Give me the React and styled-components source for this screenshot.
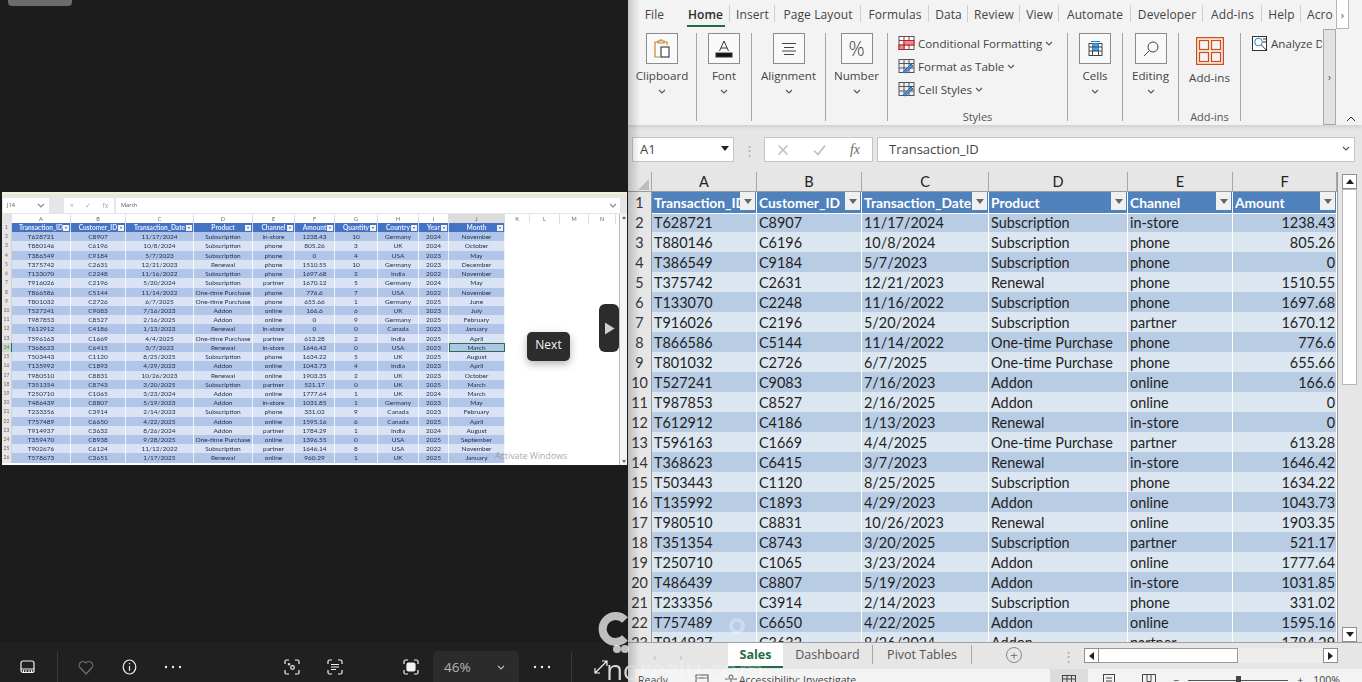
import React from "react";
import styled, { createGlobalStyle } from "styled-components";

const Global = createGlobalStyle`
  html, body { margin: 0; padding: 0; background: #1c1c1c; overflow: hidden; }
  #root { width: 1362px; height: 682px; overflow: hidden; }
  * { box-sizing: border-box; }
`;

const DATA = [
  ["T628721","C8907","11/17/2024","Subscription","in-store","1238.43","10","Germany","2024","November"],
  ["T880146","C6196","10/8/2024","Subscription","phone","805.26","3","UK","2024","October"],
  ["T386549","C9184","5/7/2023","Subscription","phone","0","4","USA","2023","May"],
  ["T375742","C2631","12/21/2023","Renewal","phone","1510.55","10","Germany","2023","December"],
  ["T133070","C2248","11/16/2022","Subscription","phone","1697.68","2","India","2022","November"],
  ["T916026","C2196","5/20/2024","Subscription","partner","1670.12","5","Germany","2024","May"],
  ["T866586","C5144","11/14/2022","One-time Purchase","phone","776.6","7","USA","2022","November"],
  ["T801032","C2726","6/7/2025","One-time Purchase","phone","655.66","1","Germany","2025","June"],
  ["T527241","C9083","7/16/2023","Addon","online","166.6","6","UK","2023","July"],
  ["T987853","C8527","2/16/2025","Addon","online","0","9","Germany","2025","February"],
  ["T612912","C4186","1/13/2023","Renewal","in-store","0","0","Canada","2023","January"],
  ["T596163","C1669","4/4/2025","One-time Purchase","partner","613.28","2","India","2025","April"],
  ["T368623","C6415","3/7/2023","Renewal","in-store","1646.42","0","USA","2023","March"],
  ["T503443","C1120","8/25/2025","Subscription","phone","1634.22","5","UK","2025","August"],
  ["T135992","C1893","4/29/2023","Addon","online","1043.73","4","India","2023","April"],
  ["T980510","C8831","10/26/2023","Renewal","online","1903.35","2","UK","2023","October"],
  ["T351354","C8743","3/20/2025","Subscription","partner","521.17","0","UK","2025","March"],
  ["T250710","C1065","3/23/2024","Addon","online","1777.64","1","UK","2024","March"],
  ["T486439","C8807","5/19/2023","Addon","in-store","1031.85","1","Germany","2023","May"],
  ["T233356","C3914","2/14/2023","Subscription","phone","331.02","9","Canada","2023","February"],
  ["T757489","C6650","4/22/2025","Addon","online","1595.16","6","Canada","2025","April"],
  ["T914937","C3632","8/26/2024","Addon","partner","1784.29","1","India","2024","August"],
  ["T359470","C8938","9/28/2025","One-time Purchase","online","1396.55","0","USA","2025","September"],
  ["T902676","C6124","11/12/2022","Subscription","partner","1646.14","8","USA","2022","November"],
  ["T578673","C3651","1/17/2025","Renewal","online","960.29","1","UK","2025","January"],
];
const HEADERS = ["Transaction_ID","Customer_ID","Transaction_Date","Product","Channel","Amount","Quantity","Country","Year","Month"];

/* ---------- page ---------- */
const Page = styled.div`
  position: relative;
  display: flex;
  width: 1362px;
  height: 682px;
  overflow: hidden;
  font-family: "Open Sans", "Noto Sans", sans-serif;
`;
const Viewer = styled.div`
  width: 628px;
  height: 682px;
  display: flex;
  flex-direction: column;
  background: #1c1c1c;
`;
const TopPill = styled.div`
  width: 64px;
  height: 6px;
  margin-left: 8px;
  background: #6b6b6b;
  border-radius: 0 0 4px 4px;
`;
const Stage = styled.div`
  position: relative;
  flex: 1;
  padding: 186px 1px 0 2px;
`;

/* ---------- mini sheet picture ---------- */
const Shot = styled.div`
  width: 625px;
  height: 273px;
  background: #fff;
  display: flex;
  flex-direction: column;
  overflow: hidden;
  font-family: Lato, sans-serif;
  filter: blur(0.35px);
  border-top: 2px solid #f1f2cf;
`;
const ShotBar = styled.div`
  height: 20px;
  flex: none;
  background: #e6e6e6;
  display: flex;
  align-items: center;
  padding: 2px 7px 0 1px;
  font-family: "Open Sans", sans-serif;
  font-size: 5.6px;
  color: #555;
`;
const ShotName = styled.div`
  width: 46px;
  height: 15px;
  background: #fff;
  display: flex;
  align-items: center;
  justify-content: space-between;
  padding: 0 4px;
`;
const ShotFx = styled.div`
  width: 50px;
  height: 15px;
  margin-left: 15px;
  background: #fff;
  display: flex;
  align-items: center;
  justify-content: space-around;
  color: #aaa;
  font-size: 7px;
`;
const ShotInput = styled.div`
  flex: 1;
  height: 15px;
  margin-left: 2px;
  background: #fff;
  display: flex;
  align-items: center;
  justify-content: space-between;
  padding: 0 3px 0 5px;
`;
const ShotBody = styled.div`
  flex: 1;
  display: flex;
  min-height: 0;
`;
const ShotGrid = styled.div`
  width: 618px;
  border-right: 1px solid #bbb;
  display: flex;
  flex-direction: column;
`;
const ShotScroll = styled.div`
  flex: 1;
  background: #f4f4f4;
  display: flex;
  flex-direction: column;
  justify-content: space-between;
  align-items: center;
  padding: 2px 0;
`;
const ShotArrow = styled.span`
  width: 0;
  height: 0;
  border: 2px solid transparent;
  ${(p) => (p.$up ? "border-top: 0; border-bottom: 3px solid #666;" : "border-bottom: 0; border-top: 3px solid #666;")}
`;
const MINI_COLS = "10px 59px 55px 68px 59px 42px 40px 43px 41px 30px 56px 25px 30px 29px 27px 4px";
const MiniHead = styled.div`
  display: grid;
  grid-template-columns: ${MINI_COLS};
  height: 9px;
  flex: none;
  font-size: 5.6px;
  line-height: 9px;
  color: #666;
  text-align: center;
`;
const MiniLetter = styled.div`
  border-right: 1px solid #dfdfdf;
  background: ${(p) => (p.$gutter ? "#e4e4e4" : p.$active ? "#dcdcdc" : "#fff")};
  border-bottom: ${(p) => (p.$active ? "1px solid #217346" : "none")};
`;
const MiniRow = styled.div`
  display: grid;
  grid-template-columns: ${MINI_COLS};
  height: 9.23px;
  font-size: ${(p) => (p.$title ? "6.6px" : "6.5px")};
  line-height: 9.23px;
  text-align: center;
  color: #1f2c47;
  font-weight: ${(p) => (p.$title ? 700 : 400)};
`;
const MiniCell = styled.div`
  position: relative;
  white-space: nowrap;
  overflow: hidden;
  border-right: 1px solid rgba(255, 255, 255, 0.75);
  background: ${(p) => (p.$title ? "#4472c4" : p.$dark ? "#b1c5e8" : "#dae3f3")};
  color: ${(p) => (p.$title ? "#e8eefa" : "inherit")};
  outline: ${(p) => (p.$selected ? "1px solid #217346" : "none")};
  outline-offset: -1px;
`;
const MiniNum = styled.div`
  background: ${(p) => (p.$active ? "#c9d8cf" : "#e6e6e6")};
  color: #666;
  font-size: 5px;
  font-weight: 400;
  border-right: 1px solid ${(p) => (p.$active ? "#217346" : "#d0d0d0")};
`;
const MiniBlank = styled.div`
  background: #fff;
`;
const MiniFilter = styled.span`
  position: absolute;
  right: 1px;
  top: 1.5px;
  width: 6px;
  height: 6px;
  background: #f2f2f2;
  &::after {
    content: "";
    position: absolute;
    left: 1.5px;
    top: 2px;
    border: 1.5px solid transparent;
    border-top: 2px solid #555;
    border-bottom: 0;
  }
`;
const Activate = styled.div`
  position: absolute;
  left: 495px;
  top: 444px;
  font-family: "Open Sans", sans-serif;
  font-size: 8.8px;
  line-height: 12px;
  color: rgba(150, 150, 150, 0.85);
  white-space: nowrap;
`;
const NextTip = styled.div`
  position: absolute;
  left: 527px;
  top: 326px;
  width: 43px;
  height: 29px;
  background: #2c2c2c;
  border-radius: 5px;
  box-shadow: 0 3px 8px rgba(0, 0, 0, 0.3);
  color: #f4f4f4;
  font-size: 12px;
  display: flex;
  align-items: center;
  justify-content: center;
  padding-bottom: 4px;
`;
const NextArrow = styled.div`
  position: absolute;
  left: 599px;
  top: 298px;
  width: 20px;
  height: 48px;
  background: #2c2c2c;
  border-radius: 6px;
  display: flex;
  align-items: center;
  justify-content: center;
`;

/* ---------- viewer toolbar ---------- */
const ViewerBar = styled.div`
  height: 40px;
  flex: none;
  background: #202020;
  padding: 9px 0 0 7px;
  display: flex;
  align-items: flex-start;
`;
const ToolButton = styled.div`
  width: 40px;
  height: 32px;
  margin-left: ${(p) => p.$ml || 0}px;
  display: flex;
  align-items: center;
  justify-content: center;
  flex: none;
`;
const ToolSep = styled.div`
  width: 1px;
  height: 32px;
  margin-top: 1px;
  margin-left: ${(p) => p.$ml || 0}px;
  background: #3a3a3a;
  flex: none;
`;
const ZoomBox = styled.div`
  width: 86px;
  height: 32px;
  margin-left: 2px;
  background: #2b2b2b;
  border-radius: 4px 4px 0 0;
  display: flex;
  align-items: center;
  justify-content: space-between;
  padding: 0 14px 0 11px;
  color: #b5b5b5;
  font-family: "Open Sans", sans-serif;
  font-size: 13.5px;
  flex: none;
`;
const Glyph = styled.svg`
  display: block;
  fill: none;
  stroke: ${(p) => p.$c || "#f2f2f2"};
  stroke-width: ${(p) => p.$sw || 1.2};
  flex: none;
`;

const Dots = () => (
  <Glyph width="18" height="4" viewBox="0 0 18 4" $sw="0">
    <circle cx="2" cy="2" r="1.2" fill="#eee" />
    <circle cx="9" cy="2" r="1.2" fill="#eee" />
    <circle cx="16" cy="2" r="1.2" fill="#eee" />
  </Glyph>
);
const Corners = ({ children }) => (
  <Glyph width="16" height="16" viewBox="0 0 16 16">
    <path d="M1 5V2.5A1.5 1.5 0 0 1 2.5 1H5M11 1h2.5A1.5 1.5 0 0 1 15 2.5V5M15 11v2.5a1.5 1.5 0 0 1-1.500 1.500H11M5 15H2.500A1.500 1.500 0 0 1 1 13.500V11" />
    {children}
  </Glyph>
);

/* ---------- excel ---------- */
const Excel = styled.div`
  position: relative;
  width: 734px;
  height: 682px;
  background: #e6e6e6;
  display: flex;
  flex-direction: column;
  overflow: hidden;
  &::before {
    content: "";
    position: absolute;
    left: 0;
    top: 0;
    bottom: 0;
    width: 12px;
    z-index: 3;
    pointer-events: none;
    background: linear-gradient(90deg, rgba(0, 0, 0, 0.18), rgba(0, 0, 0, 0));
  }
`;
const Ribbon = styled.div`
  position: relative;
  height: 125px;
  flex: none;
  background: #f3f3f3;
  box-shadow: 0 2px 4px rgba(0, 0, 0, 0.1);
  font-size: 11.6px;
  color: #444;
`;
const TabRow = styled.div`
  height: 29px;
  display: flex;
  align-items: stretch;
  overflow: hidden;
`;
const RibbonTab = styled.div`
  position: relative;
  width: ${(p) => p.$w}px;
  flex: none;
  display: flex;
  align-items: center;
  justify-content: ${(p) => (p.$start ? "flex-start" : "center")};
  padding-left: ${(p) => (p.$start ? 6 : 0)}px;
  font-size: 12px;
  letter-spacing: 0.1px;
  color: ${(p) => (p.$on ? "#2b2b2b" : "#444")};
  font-weight: ${(p) => (p.$on ? 600 : 400)};
  white-space: nowrap;
  &::after {
    content: "";
    position: absolute;
    top: 5px;
    bottom: 7px;
    right: 0;
    width: 1px;
    background: ${(p) => (p.$plain ? "transparent" : "#cfcfcf")};
  }
`;
const HomeMark = styled.span`
  position: absolute;
  left: 6px;
  right: 5px;
  bottom: 2px;
  height: 2px;
  background: #1f6e43;
`;
const TabMore = styled.div`
  position: absolute;
  left: 708px;
  top: 0;
  width: 13px;
  height: 29px;
  background: #fff;
  border: 1px solid #b5b5b5;
  border-top: 0;
  color: #1f6e43;
  font-size: 11px;
  display: flex;
  align-items: center;
  justify-content: center;
`;
const GroupRow = styled.div`
  height: 88px;
  margin-top: 4px;
  display: flex;
`;
const Group = styled.div`
  width: ${(p) => p.$w}px;
  flex: none;
  height: 88px;
  border-right: 1px solid #a6a6a6;
  display: flex;
  flex-direction: column;
  align-items: center;
`;
const IconBox = styled.div`
  width: 32px;
  height: 31px;
  background: #f9f9f9;
  border: 1px solid #8c8c8c;
  display: flex;
  align-items: center;
  justify-content: center;
  color: #444;
  font-size: 20px;
  font-weight: 300;
  flex: none;
`;
const GroupLabel = styled.div`
  margin-top: 4px;
  line-height: 16px;
  white-space: nowrap;
`;
const GroupCaret = styled.div`
  margin-top: 3px;
  height: 9px;
  display: flex;
  align-items: center;
`;
const Spring = styled.div`
  flex: 1;
`;
const Caption = styled.div`
  font-size: 11px;
  line-height: 14px;
  margin-bottom: -3px;
  color: #555;
`;
const StyleRows = styled.div`
  align-self: flex-start;
  padding: 2px 0 0 10px;
  display: flex;
  flex-direction: column;
  gap: 7px;
`;
const StyleRow = styled.div`
  height: 16px;
  display: flex;
  align-items: center;
  gap: 3px;
  white-space: nowrap;
`;
const AddInBox = styled.div`
  margin-top: 4px;
  margin-bottom: 1px;
  display: flex;
`;
const AnalyzeClip = styled.div`
  width: 81px;
  flex: none;
  padding: 3px 0 0 11px;
  overflow: hidden;
  white-space: nowrap;
  display: flex;
  gap: 3px;
  align-items: flex-start;
  line-height: 16px;
`;
const RibbonScroll = styled.div`
  position: absolute;
  left: 695px;
  top: 29px;
  width: 13px;
  height: 96px;
  background: #e2e2e2;
  border: 1px solid #a8a8a8;
  display: flex;
  align-items: center;
  justify-content: center;
  color: #444;
  font-size: 10px;
`;
const Collapse = styled.div`
  position: absolute;
  left: 718px;
  top: 116px;
`;
const FormulaBand = styled.div`
  height: 47px;
  flex: none;
  display: flex;
  align-items: flex-start;
  padding: 12px 7px 0 4px;
  font-size: 13px;
  color: #444;
`;
const NameBox = styled.div`
  width: 102px;
  height: 25px;
  background: #fff;
  border: 1px solid #c4c4c4;
  display: flex;
  align-items: center;
  justify-content: space-between;
  padding: 0 4px 2px 7px;
`;
const Grip = styled.div`
  width: 30px;
  height: 25px;
  display: flex;
  align-items: center;
  justify-content: center;
  color: #aaa;
`;
const FxBox = styled.div`
  width: 109px;
  height: 25px;
  background: #fff;
  border: 1px solid #c4c4c4;
  display: flex;
  align-items: center;
  justify-content: space-between;
  padding: 0 12px 0 12px;
`;
const FxMark = styled.span`
  font-family: "Liberation Serif", serif;
  font-style: italic;
  font-size: 14px;
  color: #666;
`;
const FormulaInput = styled.div`
  flex: 1;
  height: 25px;
  margin-left: 4px;
  background: #fff;
  border: 1px solid #c4c4c4;
  display: flex;
  align-items: center;
  justify-content: space-between;
  padding: 0 4px 2px 11px;
`;
const SheetArea = styled.div`
  height: 470px;
  flex: none;
  display: flex;
`;
const SheetGrid = styled.div`
  width: 710px;
  flex: none;
  height: 470px;
  overflow: hidden;
  font-family: Lato, sans-serif;
  font-size: 14.4px;
  color: #1f1f1f;
  border-right: 1px solid #9a9a9a;
`;
const COLS = "24px 105px 105px 127px 139px 105px 104px";
const LetterRow = styled.div`
  display: grid;
  grid-template-columns: ${COLS};
  height: 20px;
  line-height: 20px;
  text-align: center;
  background: #e6e6e6;
  border-bottom: 1px solid #9a9a9a;
  color: #222;
  font-size: 14.5px;
`;
const Letter = styled.div`
  border-right: 1px solid #a8a8a8;
  position: relative;
`;
const Corner = styled.span`
  position: absolute;
  right: 2px;
  bottom: 2px;
  border-left: 11px solid transparent;
  border-bottom: 11px solid #bdbdbd;
`;
const DataRow = styled.div`
  display: grid;
  grid-template-columns: ${COLS};
  height: 20px;
  line-height: 21px;
`;
const RowNum = styled.div`
  background: #e6e6e6;
  text-align: center;
  font-size: 14.4px;
  border-right: 1px solid #9a9a9a;
  border-bottom: 1px solid #c4c4c4;
  color: #333;
`;
const Cell = styled.div`
  padding: 0 1px 0 2px;
  white-space: nowrap;
  overflow: hidden;
  background: ${(p) => (p.$dark ? "#b8cce4" : "#dce6f1")};
  border-right: 1px solid #fff;
  border-bottom: 1px solid #fff;
  text-align: ${(p) => (p.$right ? "right" : "left")};
`;
const HeadCell = styled.div`
  position: relative;
  padding: 0 2px;
  white-space: nowrap;
  overflow: hidden;
  background: #4f81bd;
  color: #fff;
  font-size: 13.8px;
  font-weight: 700;
  border-right: 1px solid #fff;
  border-bottom: 1px solid #fff;
`;
const FilterBtn = styled.span`
  position: absolute;
  right: 1px;
  top: 0;
  width: 15px;
  height: 18px;
  background: #f0f0f0;
  display: flex;
  align-items: center;
  justify-content: center;
  &::after {
    content: "";
    border: 4px solid transparent;
    border-top: 5px solid #666;
    border-bottom: 0;
  }
`;
const VScroll = styled.div`
  width: 15px;
  height: 470px;
  margin-left: 4px;
  padding-top: 2px;
  display: flex;
  flex-direction: column;
  flex: none;
`;
const ScrollBtn = styled.div`
  height: 15px;
  flex: none;
  background: #fff;
  border: 1px solid #8f8f8f;
  display: flex;
  align-items: center;
  justify-content: center;
`;
const ScrollThumb = styled.div`
  height: 196px;
  flex: none;
  background: #fff;
  border: 1px solid #b5b5b5;
`;
const Tri = styled.span`
  width: 0;
  height: 0;
  border: 4px solid transparent;
  ${(p) =>
    p.$dir === "up" && "border-top: 0; border-bottom: 5px solid #222;"}
  ${(p) =>
    p.$dir === "down" && "border-bottom: 0; border-top: 5px solid #222;"}
  ${(p) =>
    p.$dir === "left" && "border-left: 0; border-right: 5px solid #222;"}
  ${(p) =>
    p.$dir === "right" && "border-right: 0; border-left: 5px solid #222;"}
`;
const SheetTabs = styled.div`
  height: 27px;
  flex: none;
  background: #e6e6e6;
  border-top: 1px solid #a0a0a0;
  display: flex;
  align-items: stretch;
  font-size: 12.5px;
  color: #555;
  position: relative;
  z-index: 1;
`;
const TabNav = styled.div`
  width: 100px;
  flex: none;
  display: flex;
  align-items: center;
  padding-left: 25px;
  gap: 23px;
  color: #b9b9b9;
  font-size: 11px;
`;
const ActiveSheet = styled.div`
  width: 55px;
  height: 25px;
  flex: none;
  background: #fff;
  color: #1f6e43;
  font-weight: 700;
  border-bottom: 2px solid #1f6e43;
  display: flex;
  align-items: center;
  justify-content: center;
`;
const SheetTab = styled.div`
  width: ${(p) => p.$w}px;
  flex: none;
  height: 19px;
  margin-top: 2px;
  border-right: 1px solid #a8a8a8;
  display: flex;
  align-items: center;
  justify-content: center;
`;
const AddSheet = styled.div`
  width: 16px;
  height: 16px;
  margin: 4px 0 0 34px;
  flex: none;
  border: 1px solid #8a8a8a;
  border-radius: 50%;
  display: flex;
  align-items: center;
  justify-content: center;
  font-size: 13px;
  line-height: 1;
  color: #777;
`;
const TabGrip = styled.div`
  width: 10px;
  margin-left: 41px;
  display: flex;
  align-items: center;
  justify-content: center;
  color: #aaa;
  flex: none;
`;
const HScroll = styled.div`
  width: 254px;
  height: 15px;
  margin: 5px 0 0 11px;
  flex: none;
  background: #ededed;
  display: flex;
  justify-content: space-between;
`;
const HThumbWrap = styled.div`
  display: flex;
`;
const HBtn = styled.div`
  width: 15px;
  height: 15px;
  background: #fff;
  border: 1px solid #8f8f8f;
  display: flex;
  align-items: center;
  justify-content: center;
`;
const HThumb = styled.div`
  width: 139px;
  height: 15px;
  background: #fff;
  border: 1px solid #9a9a9a;
  border-left: 0;
`;
const StatusBar = styled.div`
  height: 22px;
  flex: none;
  background: #f3f3f3;
  display: flex;
  align-items: center;
  font-size: 10.5px;
  color: #444;
  padding-left: 10px;
  white-space: nowrap;
`;
const StatusGap = styled.span`
  display: inline-block;
  flex: none;
  width: ${(p) => p.$w}px;
`;
const ViewBtn = styled.div`
  width: 38px;
  height: 22px;
  margin-right: 2px;
  flex: none;
  background: ${(p) => (p.$on ? "#dcdcdc" : "transparent")};
  display: flex;
  align-items: center;
  justify-content: center;
`;
const SliderTrack = styled.div`
  position: relative;
  width: 100px;
  height: 1px;
  background: #555;
  flex: none;
  margin: 0 9px;
  &::after {
    content: "";
    position: absolute;
    left: 48px;
    top: -4px;
    width: 5px;
    height: 9px;
    background: #444;
  }
`;

/* ---------- watermark over both panels ---------- */
const Watermark = styled.div`
  position: absolute;
  left: 597px;
  top: 596px;
  width: 170px;
  height: 90px;
  z-index: 5;
  pointer-events: none;
`;
const WatermarkText = styled.div`
  position: absolute;
  left: 9px;
  top: 55px;
  font-family: "Open Sans", sans-serif;
  font-size: 28px;
  line-height: 36px;
  letter-spacing: -0.4px;
  white-space: nowrap;
  color: transparent;
  background: linear-gradient(90deg, rgba(255, 255, 255, 0.82) 22px, rgba(255, 255, 255, 0.28) 22px);
  -webkit-background-clip: text;
  background-clip: text;
`;

const Chev = ({ c = "#555" }) => (
  <Glyph width="8" height="5" viewBox="0 0 8 5" $c={c} $sw="1.1">
    <path d="M1 1l3 3 3-3" />
  </Glyph>
);

const TABS = [
  ["File", 53, true],
  ["Home", 49],
  ["Insert", 45],
  ["Page Layout", 86],
  ["Formulas", 68],
  ["Data", 39],
  ["Review", 52],
  ["View", 39],
  ["Automate", 72],
  ["Developer", 72],
  ["Add-ins", 59],
  ["Help", 39],
];

const SmallGrid = ({ accent, pen }) => (
  <Glyph width="17" height="16" viewBox="0 0 17 16" $c="#555" $sw="1">
    <rect x="1" y="1.500" width="15" height="13" fill={accent === "red" ? "#fff" : "#eaf1f8"} />
    {accent === "red" && <path d="M1 5.500h15M1 10h15M6 1.500v13M11 1.500v13" stroke="#b3262c" />}
    {accent === "red" && <rect x="6" y="5.500" width="10" height="4.500" fill="#f08a8a" stroke="#b3262c" />}
    {accent === "red" && <rect x="1" y="10" width="5" height="4.500" fill="#f08a8a" stroke="#b3262c" />}
    {accent !== "red" && <path d="M1 5.500h15M1 10h15M6 1.500v13M11 1.500v13" />}
    {pen && <path d="M5 14l8-8 2 2-8 7z" fill="#4f92d6" stroke="#2d6aa8" />}
  </Glyph>
);

export default function App() {
  const active = 14;
  return (
    <Page>
      <Global />
      <Viewer>
        <TopPill />
        <Stage>
          <Shot>
            <ShotBar>
              <ShotName>J14<Chev c="#888" /></ShotName>
              <ShotFx><span>×</span><span>✓</span><span>fx</span></ShotFx>
              <ShotInput>March<Chev c="#888" /></ShotInput>
            </ShotBar>
            <ShotBody>
              <ShotGrid>
                <MiniHead>
                  <MiniLetter $gutter />
                  {"ABCDEFGHIJKLMN".split("").map((l) => (
                    <MiniLetter key={l} $active={l === "J"}>{l}</MiniLetter>
                  ))}
                </MiniHead>
                <MiniRow $title>
                  <MiniNum>1</MiniNum>
                  {HEADERS.map((h) => (
                    <MiniCell key={h} $title>{h}<MiniFilter /></MiniCell>
                  ))}
                  <MiniBlank />
                </MiniRow>
                {DATA.map((row, i) => (
                  <MiniRow key={row[0]}>
                    <MiniNum $active={i + 2 === active}>{i + 2}</MiniNum>
                    {row.map((v, j) => (
                      <MiniCell key={j} $dark={i % 2 === 0} $selected={i + 2 === active && j === 9}>{v}</MiniCell>
                    ))}
                    <MiniBlank />
                  </MiniRow>
                ))}
              </ShotGrid>
              <ShotScroll>
                <ShotArrow $up />
                <ShotArrow />
              </ShotScroll>
            </ShotBody>
          </Shot>
          <Activate>Activate Windows</Activate>
          <NextTip>Next</NextTip>
          <NextArrow>
            <Glyph width="11" height="13" viewBox="0 0 11 13" $sw="0">
              <path d="M1 .5l9.500 6-9.500 6z" fill="#cfcfcf" />
            </Glyph>
          </NextArrow>
        </Stage>
        <ViewerBar>
          <ToolButton>
            <Glyph width="15" height="14" viewBox="0 0 15 14">
              <rect x="1" y="1" width="13" height="11.500" rx="2" />
              <path d="M1 9h13M3.500 10v2M6 10v2M9 10v2M11.500 10v2" />
            </Glyph>
          </ToolButton>
          <ToolSep $ml={10} />
          <ToolButton $ml={8}>
            <Glyph width="16" height="15" viewBox="0 0 16 15" $c="#6f6f6f">
              <path d="M8 14L2 7.500A3.700 3.700 0 0 1 8 3a3.700 3.700 0 0 1 6 4.500z" />
            </Glyph>
          </ToolButton>
          <ToolButton $ml={3}>
            <Glyph width="15" height="16" viewBox="0 0 15 16">
              <ellipse cx="7.500" cy="8" rx="6.300" ry="7" />
              <path d="M7.500 7v4.800M7.500 4v1.200" />
            </Glyph>
          </ToolButton>
          <ToolButton $ml={4}><Dots /></ToolButton>
          <ToolButton $ml={79}>
            <Corners>
              <circle cx="8.500" cy="8.500" r="1.800" />
              <path d="M5 4v2.500M3.800 5.200h2.500" />
            </Corners>
          </ToolButton>
          <ToolButton $ml={3}>
            <Corners>
              <path d="M4 5.500h8M4 8h8M4 10.500h5" />
            </Corners>
          </ToolButton>
          <ToolButton $ml={36}>
            <Corners>
              <rect x="4" y="4" width="8" height="8" rx="1.500" fill="#f2f2f2" />
            </Corners>
          </ToolButton>
          <ZoomBox>46%<Chev c="#bbb" /></ZoomBox>
          <ToolButton $ml={3}><Dots /></ToolButton>
          <ToolSep $ml={9} />
          <ToolButton $ml={9}>
            <Glyph width="14" height="14" viewBox="0 0 14 14">
              <path d="M1 13L13 1M8 1h5v5M1 8v5h5" />
            </Glyph>
          </ToolButton>
        </ViewerBar>
      </Viewer>

      <Excel>
        <Ribbon>
          <TabRow>
            {TABS.map(([t, w, plain]) => (
              <RibbonTab key={t} $w={w} $plain={plain} $on={t === "Home"}>
                {t}
                {t === "Home" && <HomeMark />}
              </RibbonTab>
            ))}
            <RibbonTab $w={34} $start $plain>Acro</RibbonTab>
          </TabRow>
          <TabMore>›</TabMore>
          <GroupRow>
            <Group $w={69}>
              <IconBox>
                <Glyph width="18" height="20" viewBox="0 0 18 20" $c="#c98a2b" $sw="1.200">
                  <path d="M6 3H2v15h5M11 3h3v3M5 4V2h2V1h2v1h2v2z" />
                  <rect x="8" y="8" width="8" height="10" stroke="#444" fill="#fff" />
                </Glyph>
              </IconBox>
              <GroupLabel>Clipboard</GroupLabel>
              <GroupCaret><Chev /></GroupCaret>
            </Group>
            <Group $w={55}>
              <IconBox>
                <Glyph width="18" height="20" viewBox="0 0 18 20" $c="#333" $sw="1">
                  <path d="M4.500 12L9 2l4.500 10M6 9h6" />
                  <rect x="1" y="14" width="16" height="4" fill="#111" />
                </Glyph>
              </IconBox>
              <GroupLabel>Font</GroupLabel>
              <GroupCaret><Chev /></GroupCaret>
            </Group>
            <Group $w={74}>
              <IconBox>
                <Glyph width="16" height="14" viewBox="0 0 16 14" $c="#444" $sw="1">
                  <path d="M1 1.500h14M3 5.500h10M1 9h14M3 12.500h10" />
                </Glyph>
              </IconBox>
              <GroupLabel>Alignment</GroupLabel>
              <GroupCaret><Chev /></GroupCaret>
            </Group>
            <Group $w={62}>
              <IconBox>%</IconBox>
              <GroupLabel>Number</GroupLabel>
              <GroupCaret><Chev /></GroupCaret>
            </Group>
            <Group $w={180}>
              <StyleRows>
                <StyleRow><SmallGrid accent="red" />Conditional Formatting <Chev /></StyleRow>
                <StyleRow><SmallGrid pen />Format as Table <Chev /></StyleRow>
                <StyleRow><SmallGrid pen />Cell Styles <Chev /></StyleRow>
              </StyleRows>
              <Spring />
              <Caption>Styles</Caption>
            </Group>
            <Group $w={55}>
              <IconBox>
                <Glyph width="17" height="17" viewBox="0 0 17 17" $c="#444" $sw="1">
                  <rect x="2" y="3.500" width="13" height="12" fill="#fff" />
                  <rect x="5.500" y="3.500" width="6" height="7" fill="#4aa3e8" stroke="#2a7fc4" />
                  <path d="M2 7h13M2 11h13M5.500 11v4.500M11.500 11v4.500" />
                  <path d="M4 1.500h9" stroke="#2a7fc4" />
                </Glyph>
              </IconBox>
              <GroupLabel>Cells</GroupLabel>
              <GroupCaret><Chev /></GroupCaret>
            </Group>
            <Group $w={56}>
              <IconBox>
                <Glyph width="18" height="18" viewBox="0 0 18 18" $c="#444" $sw="1">
                  <circle cx="11" cy="7" r="5" />
                  <path d="M7.500 10.500L2 16" />
                </Glyph>
              </IconBox>
              <GroupLabel>Editing</GroupLabel>
              <GroupCaret><Chev /></GroupCaret>
            </Group>
            <Group $w={62}>
              <AddInBox>
                <Glyph width="28" height="28" viewBox="0 0 28 28" $c="#c8501e" $sw="1.200">
                  <rect x=".6" y=".6" width="26.800" height="26.800" fill="#fbe9dc" />
                  <rect x="3.500" y="3.500" width="9" height="9" fill="#f3f3f3" />
                  <rect x="15.500" y="3.500" width="9" height="9" fill="#f3f3f3" />
                  <rect x="3.500" y="15.500" width="9" height="9" fill="#f3f3f3" />
                  <rect x="15.500" y="15.500" width="9" height="9" fill="#f3f3f3" />
                </Glyph>
              </AddInBox>
              <GroupLabel>Add-ins</GroupLabel>
              <Spring />
              <Caption>Add-ins</Caption>
            </Group>
            <AnalyzeClip>
              <Glyph width="16" height="16" viewBox="0 0 16 16" $c="#333" $sw="1">
                <rect x=".5" y=".5" width="14" height="14" fill="#fff" />
                <circle cx="6.500" cy="6" r="3.800" stroke="#2a7fc4" />
                <path d="M9.500 9l5.500 6M11 3h3M11 6h3" />
              </Glyph>
              Analyze Data
            </AnalyzeClip>
          </GroupRow>
          <RibbonScroll>›</RibbonScroll>
          <Collapse>
            <Glyph width="10" height="6" viewBox="0 0 10 6" $c="#333" $sw="1">
              <path d="M1 5l4-4 4 4" />
            </Glyph>
          </Collapse>
        </Ribbon>

        <FormulaBand>
          <NameBox>A1<Tri $dir="down" /></NameBox>
          <Grip>⋮</Grip>
          <FxBox>
            <Glyph width="12" height="12" viewBox="0 0 12 12" $c="#bdbdbd" $sw="1.500"><path d="M1.500 1.500l9 9M10.500 1.500l-9 9" /></Glyph>
            <Glyph width="13" height="12" viewBox="0 0 13 12" $c="#bdbdbd" $sw="1.500"><path d="M1 6.500l4 4 7-9" /></Glyph>
            <FxMark>fx</FxMark>
          </FxBox>
          <FormulaInput>Transaction_ID<Chev /></FormulaInput>
        </FormulaBand>

        <SheetArea>
          <SheetGrid>
            <LetterRow>
              <Letter><Corner /></Letter>
              {"ABCDEF".split("").map((l) => <Letter key={l}>{l}</Letter>)}
            </LetterRow>
            <DataRow>
              <RowNum>1</RowNum>
              {HEADERS.slice(0, 6).map((h) => (
                <HeadCell key={h}>{h}<FilterBtn /></HeadCell>
              ))}
            </DataRow>
            {DATA.slice(0, 23).map((row, i) => (
              <DataRow key={row[0]}>
                <RowNum>{i + 2}</RowNum>
                {row.slice(0, 6).map((v, j) => (
                  <Cell key={j} $dark={i % 2 === 0} $right={j === 5}>{v}</Cell>
                ))}
              </DataRow>
            ))}
          </SheetGrid>
          <VScroll>
            <ScrollBtn><Tri $dir="up" /></ScrollBtn>
            <ScrollThumb />
            <Spring />
            <ScrollBtn><Tri $dir="down" /></ScrollBtn>
          </VScroll>
        </SheetArea>

        <SheetTabs>
          <TabNav><span>‹</span><span>›</span></TabNav>
          <ActiveSheet>Sales</ActiveSheet>
          <SheetTab $w={90}>Dashboard</SheetTab>
          <SheetTab $w={99}>Pivot Tables</SheetTab>
          <AddSheet>+</AddSheet>
          <TabGrip>⋮</TabGrip>
          <HScroll>
            <HThumbWrap>
              <HBtn><Tri $dir="left" /></HBtn>
              <HThumb />
            </HThumbWrap>
            <HBtn><Tri $dir="right" /></HBtn>
          </HScroll>
        </SheetTabs>
        <StatusBar>
          Ready
          <StatusGap $w={27} />
          <Glyph width="14" height="12" viewBox="0 0 14 12" $c="#555" $sw="1"><rect x="1" y="1" width="12" height="10" /><path d="M1 4h12" /></Glyph>
          <StatusGap $w={15} />
          <Glyph width="14" height="12" viewBox="0 0 14 12" $c="#555" $sw="1"><circle cx="7" cy="3" r="2" /><path d="M1 5h12M7 5v3l-3 4M7 8l3 4" /></Glyph>
          <StatusGap $w={1} />
          Accessibility: Investigate
          <StatusGap $w={194} />
          <ViewBtn $on>
            <Glyph width="14" height="11" viewBox="0 0 14 11" $c="#444" $sw="1"><rect x=".5" y=".5" width="13" height="10" /><path d="M.5 4h13M5 .5v10M9.500 .5v10" /></Glyph>
          </ViewBtn>
          <ViewBtn>
            <Glyph width="12" height="12" viewBox="0 0 12 12" $c="#444" $sw="1"><rect x=".5" y=".5" width="11" height="11" /><path d="M3 4h6M3 7h6" /></Glyph>
          </ViewBtn>
          <ViewBtn>
            <Glyph width="14" height="12" viewBox="0 0 14 12" $c="#444" $sw="1"><path d="M.5 11V.5h13V11M5 .5v7h4v-7" /></Glyph>
          </ViewBtn>
          <StatusGap $w={3} />
          −
          <SliderTrack />
          +
          <StatusGap $w={10} />
          100%
        </StatusBar>
      </Excel>

      <Watermark>
        <svg width="170" height="60" viewBox="0 0 170 60">
          <path d="M28 24a13 13 0 1 0 0 18" fill="none" stroke="rgba(255,255,255,.72)" strokeWidth="8" />
          <circle cx="20" cy="53" r="4" fill="rgba(255,255,255,.72)" />
          <circle cx="28" cy="53" r="4" fill="rgba(255,255,255,.72)" />
          <circle cx="140" cy="30" r="6" fill="none" stroke="rgba(255,255,255,.3)" strokeWidth="4" />
          <circle cx="112" cy="14" r="3" fill="rgba(255,255,255,.25)" />
        </svg>
        <WatermarkText>norezlu.com</WatermarkText>
      </Watermark>
    </Page>
  );
}
